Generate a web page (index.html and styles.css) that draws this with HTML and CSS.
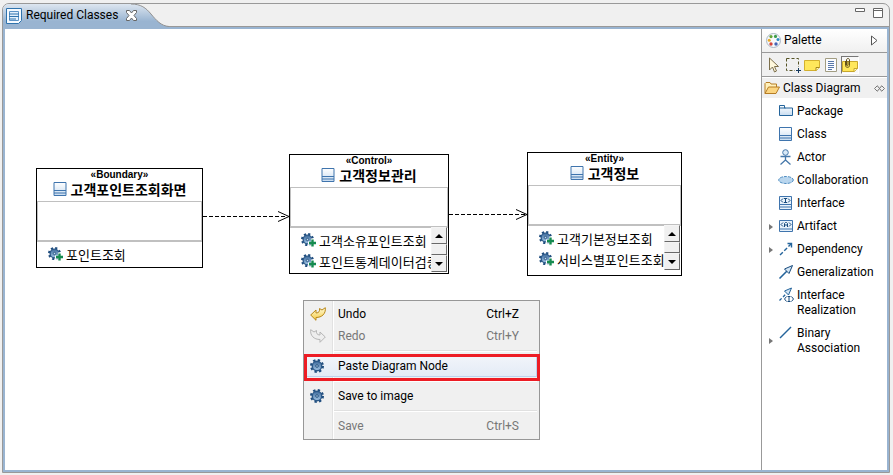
FILE: index.html
```html
<!DOCTYPE html>
<html lang="ko">
<head>
<meta charset="utf-8">
<title>Required Classes</title>
<link rel="stylesheet" href="styles.css">
</head>
<body>
<svg class="defs" aria-hidden="true">
  <defs>
    <linearGradient id="tabfill" x1="0" y1="0" x2="0" y2="1"><stop offset="0" stop-color="#dde6f0"/><stop offset=".75" stop-color="#99b4d1"/><stop offset="1" stop-color="#99b4d1"/></linearGradient>
    <linearGradient id="boxfill" x1="0" y1="0" x2="0" y2="1"><stop offset="0" stop-color="#fff"/><stop offset="1" stop-color="#c8dcf0"/></linearGradient>
    <linearGradient id="gearfill" x1="0" y1="0" x2="0" y2="1"><stop offset="0" stop-color="#3d6a9b"/><stop offset="1" stop-color="#a4c6e6"/></linearGradient>
    <linearGradient id="gold" x1="0" y1="0" x2="0" y2="1"><stop offset="0" stop-color="#fffbd8"/><stop offset="1" stop-color="#f5cb45"/></linearGradient>
    <symbol id="class" viewBox="0 0 14 16"><path d="M1 1.500h12v13H1z" fill="url(#boxfill)" stroke="#3f74ad"/><path d="M1 9.500h12M1 12h12" stroke="#3f74ad"/></symbol>
    <symbol id="gear" viewBox="0 0 14 14"><circle cx="7" cy="7" r="5.800" fill="none" stroke="#1f4d7e" stroke-width="2.400" stroke-dasharray="2.280 2.280"/><circle cx="7" cy="7" r="4.700" fill="url(#gearfill)" stroke="#2b5888" stroke-width="1.400"/><circle cx="7" cy="7" r="1.300" fill="#c5dbef" stroke="#23507e"/></symbol>
    <symbol id="gearplus" viewBox="0 0 16 15"><use href="#gear" width="13" height="13"/><path d="M10 5.500h3v3h3v3h-3v3h-3v-3H7v-3h3z" fill="#fff"/><path d="M11.500 6.500v7M8 10h7" stroke="#168b50" stroke-width="2.400"/></symbol>
  </defs>
</svg>
<main class="editor">
  <header class="tabbar">
    <div class="tab">
      <svg class="tab-icon" width="16" height="16" viewBox="0 0 16 16"><path d="M.5.500h15v12l-3 3H.5z" fill="#f5faff" stroke="#2f73ad"/><path d="M3.500 3.500h9v9h-9z" fill="#e4f0fb" stroke="#5c93c6"/><path d="M3 6h10M3 8.500h10M3 11h7" stroke="#2f73ad"/></svg>
      <span class="tab-label">Required Classes</span>
      <button class="plain close" aria-label="Close"><svg width="11" height="11" viewBox="0 0 11 11"><path d="M.5.500h3l2 2.500 2-2.500h3v2L8 5.500l2.500 3v2h-3l-2-2.500-2 2.500h-3v-2l2.500-3-2.500-3z" fill="#fff" stroke="#666"/></svg></button>
    </div>
    <svg class="tab-tail" width="38" height="23" viewBox="0 0 38 23"><path d="M0 0c10 0 15 4 20 10s10 12 18 12.500V23H0z" fill="url(#tabfill)"/><path d="M0 0c10 0 15 4 20 10s10 12 18 12.500" fill="none" stroke="#929292"/></svg>
    <div class="window-buttons">
      <button class="plain" aria-label="Minimize"><svg width="10" height="10" viewBox="0 0 10 10"><path d="M.5.500h9v3h-9z" fill="#fff" stroke="#666"/></svg></button>
      <button class="plain" aria-label="Maximize"><svg width="10" height="10" viewBox="0 0 10 10"><path d="M.5.500h9v9h-9zM0 2.500h10" fill="#fff" stroke="#666"/></svg></button>
    </div>
  </header>
  <div class="workspace">
    <section class="canvas" aria-label="Class diagram">
      <svg class="links" width="700" height="260" viewBox="0 0 700 260"><g fill="none" stroke="#000"><path d="M198 187.500h84M444 185.500h76" stroke-dasharray="4 2"/><path d="M273 182.500l11 5-11 5M511 180.500l11 5-11 5"/></g></svg>
      <article class="node boundary">
        <div class="head"><span class="stereo">«Boundary»</span><h2><svg width="14" height="16"><use href="#class"/></svg>고객포인트조회화면</h2></div>
        <div class="attrs"></div>
        <ul><li><svg width="16" height="15"><use href="#gearplus"/></svg>포인트조회</li></ul>
      </article>
      <article class="node control">
        <div class="head"><span class="stereo">«Control»</span><h2><svg width="14" height="16"><use href="#class"/></svg>고객정보관리</h2></div>
        <div class="attrs"></div>
        <div class="ops">
          <ul><li><svg width="16" height="15"><use href="#gearplus"/></svg>고객소유포인트조회</li><li><svg width="16" height="15"><use href="#gearplus"/></svg>포인트통계데이터검증</li></ul>
          <div class="scroll"><button aria-label="Scroll up"><svg width="8" height="4"><path d="M0 4l4-4 4 4z"/></svg></button><span class="thumb"></span><button aria-label="Scroll down"><svg width="8" height="4"><path d="M0 0l4 4 4-4z"/></svg></button></div>
        </div>
      </article>
      <article class="node entity">
        <div class="head"><span class="stereo">«Entity»</span><h2><svg width="14" height="16"><use href="#class"/></svg>고객정보</h2></div>
        <div class="attrs"></div>
        <div class="ops">
          <ul><li><svg width="16" height="15"><use href="#gearplus"/></svg>고객기본정보조회</li><li><svg width="16" height="15"><use href="#gearplus"/></svg>서비스별포인트조회</li></ul>
          <div class="scroll"><button aria-label="Scroll up"><svg width="8" height="4"><path d="M0 4l4-4 4 4z"/></svg></button><span class="thumb"></span><button aria-label="Scroll down"><svg width="8" height="4"><path d="M0 0l4 4 4-4z"/></svg></button></div>
        </div>
      </article>
      <div class="menu" role="menu">
        <button role="menuitem"><svg width="16" height="14" viewBox="0 0 16 14"><path d="M.7 8L6 3v3c3 0 4-2 3.500-4.500L12 3 15.300.7c.7 6-3.300 9.800-9.300 9.800v2.800z" fill="url(#gold)" stroke="#b88718"/></svg><span>Undo</span><kbd>Ctrl+Z</kbd></button>
        <button role="menuitem" disabled><svg width="16" height="14" viewBox="0 0 16 14"><path d="M15.300 8L10 3v3C7 6 6 4 6.500 1.500L4 3 .7.700C0 6.700 4 10.500 10 10.500v2.800z" fill="#eee" stroke="#b5b5b5"/></svg><span>Redo</span><kbd>Ctrl+Y</kbd></button>
        <hr>
        <button role="menuitem" class="hot"><svg width="14" height="14"><use href="#gear"/></svg><span>Paste Diagram Node</span></button>
        <hr>
        <button role="menuitem"><svg width="14" height="14"><use href="#gear"/></svg><span>Save to image</span></button>
        <hr>
        <button role="menuitem" disabled><i></i><span>Save</span><kbd>Ctrl+S</kbd></button>
      </div>
    </section>
    <aside class="palette">
      <div class="palette-title">
        <svg width="15" height="15" viewBox="0 0 15 15"><circle cx="7.500" cy="7.500" r="7" fill="#f7f9fb" stroke="#aab7c4"/><circle cx="5" cy="3.600" r="1.600" fill="#65a637"/><circle cx="9.500" cy="3.400" r="1.600" fill="#3c9c4b"/><circle cx="3.200" cy="7.300" r="1.500" fill="#e9a928"/><circle cx="12" cy="6.500" r="1.500" fill="#2d8dc4"/><circle cx="5" cy="11" r="1.700" fill="#d5443b"/><circle cx="10" cy="11" r="1.700" fill="#4563b4"/></svg>
        <span>Palette</span>
        <button class="plain" aria-label="Collapse palette"><svg width="7" height="11" viewBox="0 0 7 11"><path d="M.5 1v9l5.500-4.500z" fill="#fff" stroke="#555"/></svg></button>
      </div>
      <div class="tools">
        <button class="plain" aria-label="Select"><svg width="16" height="16" viewBox="0 0 16 16"><path d="M3.500 1v12l3-3 2 5 2-1-2-4.500h4z" fill="#fff8dd" stroke="#7d704d"/></svg></button>
        <button class="plain" aria-label="Marquee"><svg width="16" height="16" viewBox="0 0 16 16"><path d="M1.500 1.500h12v12h-12z" fill="none" stroke="#555325" stroke-dasharray="3 2"/><path d="M10 10h6v6h-6z" fill="#f0f0f0"/><path d="M13.500 11v5M11 13.500h5" stroke="#15395e"/></svg></button>
        <button class="plain" aria-label="Note"><svg width="16" height="16" viewBox="0 0 16 16"><path d="M.5 3.500h15v7l-3 3H.5z" fill="#ffe75b" stroke="#d3b02e"/><path d="M12 13.500v-3h3.500" fill="#fff8c0" stroke="#a88718"/></svg></button>
        <button class="plain" aria-label="Text"><svg width="16" height="16" viewBox="0 0 16 16"><path d="M2.500 1.500h11v13h-11z" fill="#fbfcff" stroke="#a29d82"/><path d="M5 4.500h6M5 6.500h6M5 8.500h6M5 10.500h6M5 12.500h4" stroke="#5878a9"/></svg></button>
        <button class="plain pressed" aria-label="Note attachment"><svg width="16" height="16" viewBox="0 0 16 16"><path d="M.5 4.500h15v7l-3 3H.5z" fill="#ffe75b" stroke="#c8a72c"/><path d="M12 14.500v-3h3.500" fill="#fff8c0" stroke="#c8a72c"/><path d="M3.500 4v4.500c0 2.500 4 2.500 4 0V3c0-2-3-2-3 0v5c0 1 1.500 1 1.500 0V4" fill="none" stroke="#61501c"/></svg></button>
      </div>
      <button class="drawer">
        <svg width="16" height="14" viewBox="0 0 16 14"><path d="M1 12.500V2.500l1-1h4l1 1.500h5.500v3" fill="#fff0ba" stroke="#b67d25"/><path d="M1 12.500l3.500-6.500h11l-3.500 6.500z" fill="#fbd581" stroke="#b67d25"/></svg>
        <span>Class Diagram</span>
        <svg class="pin" width="11" height="7" viewBox="0 0 11 7"><path d="M3.500.500l-3 3 3 3M7.500.500l3 3-3 3M3.500 1l4 5M7.500 1l-4 5" fill="none" stroke="#777"/></svg>
      </button>
      <ul class="entries">
        <li><button><b></b><svg width="16" height="16" viewBox="0 0 16 16"><path d="M1.500 12.500v-10h5v2.500h8v7.500zM1.500 5h6" fill="url(#boxfill)" stroke="#24649b"/></svg><span>Package</span></button></li>
        <li><button><b></b><svg width="16" height="16" viewBox="0 0 16 16"><path d="M1.500 1.500h12v13h-12z" fill="url(#boxfill)" stroke="#3f74ad"/><path d="M1.500 9.500h12M1.500 12h12" stroke="#3f74ad"/></svg><span>Class</span></button></li>
        <li><button><b></b><svg width="16" height="16" viewBox="0 0 16 16"><circle cx="7.500" cy="3.500" r="2.800" fill="#d9e9f7" stroke="#4678aa"/><path d="M2.500 7.500h10M7.500 6.500V11l-5 4.500M7.500 11l5 4.500" fill="none" stroke="#4678aa" stroke-width="1.300"/></svg><span>Actor</span></button></li>
        <li><button><b></b><svg width="16" height="16" viewBox="0 0 16 16"><ellipse cx="8" cy="8" rx="7.300" ry="3.500" fill="#b9d6ee" stroke="#4e8cc0" stroke-dasharray="3 1"/></svg><span>Collaboration</span></button></li>
        <li><button><b></b><svg width="16" height="16" viewBox="0 0 16 16"><path d="M1.500 1.500h12v13h-12zM1.500 9.500h12M1.500 12h12" fill="#e8f2fb" stroke="#3f74ad"/><path d="M5 3.500l-2 2 2 2M10 3.500l2 2-2 2M6 3.500h3M7.500 3.500v4M6 7.500h3" fill="none" stroke="#174a7c"/></svg><span>Interface</span></button></li>
        <li><button><b class="more"></b><svg width="16" height="16" viewBox="0 0 16 16"><path d="M1.500 2.500h13v11h-13zM1.500 11h13" fill="#e8f2fb" stroke="#3f74ad"/><path d="M5 4.500l-2 2 2 2M11 4.500l2 2-2 2M6.500 9V5.500l1-1h1l1 1V9M6.500 7h3" fill="none" stroke="#174a7c"/></svg><span>Artifact</span></button></li>
        <li><button><b class="more"></b><svg width="16" height="16" viewBox="0 0 16 16"><path d="M2 14L13 3" stroke="#24649b" stroke-width="1.400" stroke-dasharray="4 2"/><path d="M9.500 2.500h4v4" fill="none" stroke="#24649b" stroke-width="1.400"/></svg><span>Dependency</span></button></li>
        <li><button><b></b><svg width="16" height="16" viewBox="0 0 16 16"><path d="M1.500 14.500L9 7" stroke="#24649b" stroke-width="1.600"/><path d="M14.500 1.500l-8 3.500 4.500 4.500z" fill="#d4e6f5" stroke="#174a7c"/></svg><span>Generalization</span></button></li>
        <li><button><b></b><svg width="16" height="16" viewBox="0 0 16 16"><path d="M1.500 13.500L8 7" stroke="#24649b" stroke-width="1.400" stroke-dasharray="3 2"/><path d="M13.500 1l-7 3 4 4z" fill="#d4e6f5" stroke="#24649b"/><path d="M8.500 9.500L6.500 12l2 2.500M13.500 9.500l2 2.500-2 2.500M9.500 9.500h3M11 9.500v5M9.500 14.500h3" fill="none" stroke="#174a7c"/></svg><span>Interface Realization</span></button></li>
        <li><button><b class="more"></b><svg width="16" height="16" viewBox="0 0 16 16"><path d="M2 13L13 2" stroke="#24649b" stroke-width="1.400"/></svg><span>Binary Association</span></button></li>
      </ul>
    </aside>
  </div>
</main>
</body>
</html>
```
FILE: styles.css
```css
* { box-sizing: border-box; }
body {
  margin: 0;
  height: 100vh;
  padding: 3px 3px 2px 2px;
  background: #f0f0f0;
  color: #000;
  font: 12px/15px Roboto, "Noto Sans CJK KR", sans-serif;
}
svg { display: block; flex: none; }
button { margin: 0; padding: 0; border: 0; background: none; color: inherit; font: inherit; text-align: left; }
ul { margin: 0; padding: 0; list-style: none; }
.defs { position: absolute; width: 0; height: 0; }
.plain { display: flex; align-items: center; justify-content: center; }

.editor {
  height: 100%;
  display: flex;
  flex-direction: column;
  border: 1px solid #999;
  border-radius: 7px 7px 0 0;
  overflow: hidden;
}
.tabbar { display: flex; height: 23px; flex: none; border-bottom: 1px solid #999; }
.tab {
  display: flex;
  align-items: center;
  gap: 4px;
  margin-bottom: -1px;
  padding-left: 3px;
  background: linear-gradient(#dde6f0, #99b4d1 75%);
}
.close { margin-left: 4px; position: relative; z-index: 1; }
.tab-tail { margin-left: -6px; }
.window-buttons { display: flex; gap: 8px; margin-left: auto; padding: 4px 6px 0 0; align-items: flex-start; }

.workspace { flex: 1; min-height: 0; display: flex; border: 2px solid #99b4d1; background: #fff; }
.canvas { flex: 1; position: relative; overflow: hidden; }
.links { position: absolute; left: 0; top: 0; }

.node { position: absolute; display: flex; flex-direction: column; border: 1px solid #000; background: #fff; }
.boundary { left: 31px; top: 139px; width: 167px; height: 100px; }
.control { left: 284px; top: 125px; width: 160px; height: 120px; }
.entity { left: 522px; top: 123px; width: 155px; height: 124px; }
.head { height: 32px; flex: none; text-align: center; }
.stereo { display: block; height: 12px; font: bold 10px/12px "Liberation Sans", sans-serif; }
.head h2 { display: flex; justify-content: center; align-items: center; gap: 4px; margin: 0; font: bold 14px/16px "Noto Sans CJK KR", sans-serif; }
.attrs { height: 41px; flex: none; border: 1px solid silver; border-bottom-width: 2px; }
.node ul { flex: 1; min-width: 0; overflow-x: clip; padding-top: 2px; }
.node li { display: flex; align-items: center; gap: 2px; height: 21px; padding-left: 11px; font: 13px/19px "Noto Sans CJK KR", sans-serif; white-space: nowrap; }
.ops { display: flex; flex: 1; margin-bottom: 6px; }
.scroll { display: flex; flex-direction: column; width: 16px; margin: -1px 1px 0 0; background: #f0f0f0; }
.scroll button, .thumb { border: 1px solid; border-color: #f4f4f4 #696969 #696969 #f4f4f4; background: #f0f0f0; }
.scroll button { display: flex; align-items: center; justify-content: center; height: 17px; flex: none; }
.thumb { flex: 1; }

.menu { position: absolute; left: 298px; top: 271px; width: 237px; padding: 2px; border: 1px solid #979797; background: linear-gradient(90deg, #f0f0f0 28px, #e2e2e2 28px 29px, #fff 29px 30px, #f0f0f0 30px); }
.menu button { position: relative; display: grid; grid-template-columns: 16px 1fr auto; align-items: center; width: 100%; height: 22px; padding: 0 18px 0 4px; column-gap: 12px; }
.menu button:disabled { color: #777; }
.menu kbd { font: inherit; }
.menu hr { height: 2px; margin: 3px 0 3px 28px; border: 0; border-top: 1px solid #e0e0e0; background: #fff; }
.menu .hot { background: linear-gradient(#f2f5fa, #e3ebf6); box-shadow: inset 0 0 0 1px #bcd2ee; }
.hot::after { content: ""; position: absolute; inset: -1px -3px -4px -2px; border: 3px solid #ed1c24; }

.palette { width: 126px; flex: none; border-left: 1px solid #999; }
.palette-title { display: flex; align-items: center; gap: 3px; height: 24px; padding: 0 9px 0 4px; border-bottom: 1px solid #999; background: linear-gradient(#fff, #f0f0f0); }
.palette-title .plain { margin-left: auto; }
.tools { display: flex; gap: 1px; height: 24px; align-items: center; padding-left: 3px; border-bottom: 1px solid #999; background: #f0f0f0; }
.tools button { width: 18px; height: 18px; }
.tools .pressed { border: 1px solid; border-color: #777 #fff #fff #777; background: #f8f8f8; }
.drawer { display: flex; align-items: center; gap: 3px; width: 100%; height: 20px; margin-top: 1px; padding: 0 2px; background: #f0f0f0; }
.pin { margin-left: auto; }
.entries { padding-top: 2px; }
.entries button { display: grid; grid-template-columns: 4px 16px 1fr; width: 100%; padding: 4px 4px 4px 7px; }
.entries svg { margin: -1px 0 0 5px; }
.entries span { padding-left: 8px; }
.entries b { align-self: center; height: 6px; }
.more { border: solid transparent; border-width: 3px 0 3px 4px; border-left-color: #777; }
```
